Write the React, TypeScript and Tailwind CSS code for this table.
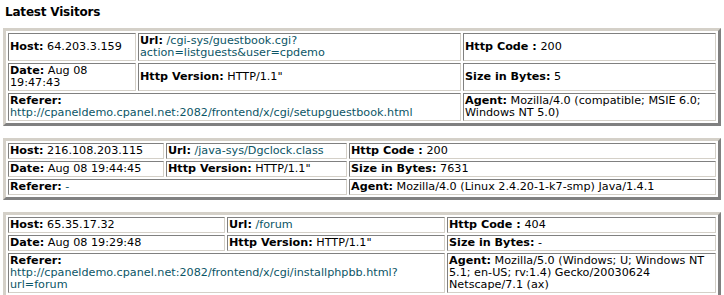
import type { ReactNode } from "react";

type Visit = {
  host: string;
  url: string[];
  code: string;
  date: string;
  version: string;
  size: string;
  referer: string[];
  agent: string;
  cols: [string, string, string];
};

// url pieces are split where the old page wrapped them (after the "?")
const visits: Visit[] = [
  {
    host: "64.203.3.159",
    url: ["/cgi-sys/guestbook.cgi?", "action=listguests&user=cpdemo"],
    code: "200",
    date: "Aug 08 19:47:43",
    version: 'HTTP/1.1"',
    size: "5",
    referer: ["http://cpaneldemo.cpanel.net:2082/frontend/x/cgi/setupguestbook.html"],
    agent: "Mozilla/4.0 (compatible; MSIE 6.0; Windows NT 5.0)",
    cols: ["w-[128px]", "w-[323px]", "w-[253px]"],
  },
  {
    host: "216.108.203.115",
    url: ["/java-sys/Dgclock.class"],
    code: "200",
    date: "Aug 08 19:44:45",
    version: 'HTTP/1.1"',
    size: "7631",
    referer: ["-"],
    agent: "Mozilla/4.0 (Linux 2.4.20-1-k7-smp) Java/1.4.1",
    cols: ["w-[156px]", "w-[181px]", "w-[367px]"],
  },
  {
    host: "65.35.17.32",
    url: ["/forum"],
    code: "404",
    date: "Aug 08 19:29:48",
    version: 'HTTP/1.1"',
    size: "-",
    referer: ["http://cpaneldemo.cpanel.net:2082/frontend/x/cgi/installphpbb.html?", "url=forum"],
    agent: "Mozilla/5.0 (Windows; U; Windows NT 5.1; en-US; rv:1.4) Gecko/20030624 Netscape/7.1 (ax)",
    cols: ["w-[217px]", "w-[218px]", "w-[269px]"],
  },
];

const Cell = ({ label, children, span }: { label: string; children: ReactNode; span?: number }) => (
  <td
    colSpan={span}
    className="border border-t-[#808080] border-l-[#808080] border-b-[#d4d0c8] border-r-[#d4d0c8] p-px align-middle"
  >
    <b>{label}</b> {children}
  </td>
);

const Link = ({ parts }: { parts: string[] }) => (
  <a href="#" className="text-[#0b5566]">
    {parts.map((p, i) => (
      <span key={i}>
        {i > 0 && <wbr />}
        <span className="whitespace-nowrap">{p}</span>
      </span>
    ))}
  </a>
);

const VisitTable = ({ v }: { v: Visit }) => (
  <table className="table-fixed w-[718px] border-separate border-spacing-[2px] border-[3px] border-t-[#d4d0c8] border-l-[#d4d0c8] border-b-[#808080] border-r-[#808080]">
    <colgroup>
      <col className={v.cols[0]} />
      <col className={v.cols[1]} />
      <col className={v.cols[2]} />
    </colgroup>
    <tbody>
      <tr>
        <Cell label="Host:">{v.host}</Cell>
        <Cell label="Url:"><Link parts={v.url} /></Cell>
        <Cell label="Http Code :">{v.code}</Cell>
      </tr>
      <tr>
        <Cell label="Date:">{v.date}</Cell>
        <Cell label="Http Version:">{v.version}</Cell>
        <Cell label="Size in Bytes:">{v.size}</Cell>
      </tr>
      <tr>
        <Cell label="Referer:" span={2}><Link parts={v.referer} /></Cell>
        <Cell label="Agent:">{v.agent}</Cell>
      </tr>
    </tbody>
  </table>
);

export default function App() {
  return (
    <div className="bg-white w-[724px] h-[295px] overflow-hidden pl-[3px] text-[11.2px] leading-[12px] text-black font-['DejaVu_Sans',Verdana,sans-serif]">
      <h2 className="text-[12px] leading-[16px] tracking-[-0.2px] font-bold pl-[2px] pt-[4px] h-[28px]">Latest Visitors</h2>
      <div className="flex flex-col gap-[12px]">
        {visits.map((v) => (
          <VisitTable key={v.host} v={v} />
        ))}
      </div>
    </div>
  );
}
